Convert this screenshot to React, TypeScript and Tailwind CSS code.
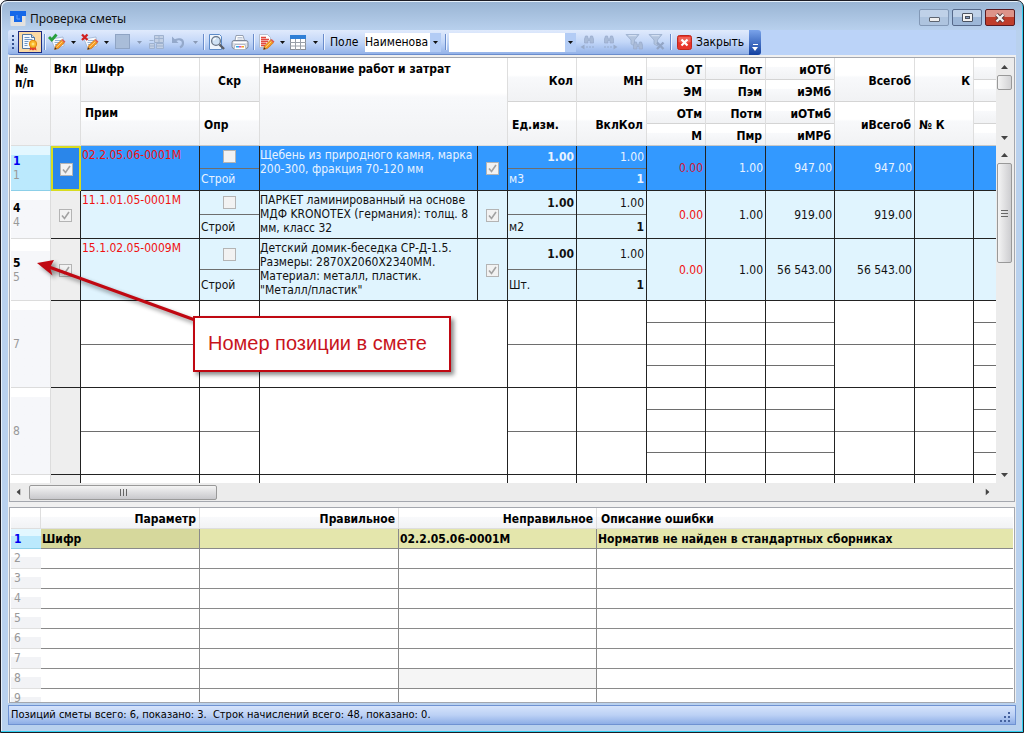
import type { ReactNode } from "react";

const ArrowDown = ({ muted = false }: { muted?: boolean }) => (
  <svg width="5" height="3" viewBox="0 0 5 3" fill={muted ? "#8a9ab5" : "#111"}>
    <path d="M0 0h5L2.5 3z" />
  </svg>
);

const Separator = () => (
  <div className="flex h-full w-1 items-center justify-center">
    <div className="h-4 w-px bg-[#6a8ccb] shadow-[1px_0_0_#eef4ff]" />
  </div>
);

const ToolButton = ({ label, children }: { label: string; children: ReactNode }) => (
  <button aria-label={label} className="flex h-full w-[23px] items-center justify-center">
    {children}
  </button>
);

const SplitButton = ({
  label,
  muted,
  children,
}: {
  label: string;
  muted?: boolean;
  children: ReactNode;
}) => (
  <div className="flex h-full">
    <button aria-label={label} className="flex w-[21px] items-center justify-center">
      {children}
    </button>
    <button aria-label={`${label}: меню`} className="flex w-3 items-center justify-center">
      <ArrowDown muted={muted} />
    </button>
  </div>
);

const Pencil = () => (
  <g>
    <path d="M6.5 16.500l1-3.800 6-5.700 2.900 2.800-6 5.700z" fill="#f59a23" stroke="#c9690c" strokeWidth=".6" />
    <path d="M8.500 14.300l6-5.800" stroke="#ffd27a" strokeWidth="1" />
    <path d="M13.500 7l1.200-1 2.800 2.700-1.100 1.100z" fill="#e0554a" />
    <path d="M6.500 16.500l.6-2.200 1.700 1.600z" fill="#333" />
  </g>
);

const CertificateIcon = () => (
  <svg width="18" height="18" viewBox="0 0 18 18">
    <path d="M1.500 1.500h9l3 3v11h-12z" fill="#f4f8fd" stroke="#54789f" />
    <path d="M10.500 1.500v3h3" fill="#c8dcf0" stroke="#54789f" />
    <path d="M3.500 4.500h5M3.500 6.500h8M3.500 8.500h4M3.500 10.500h3M3.500 12.500h3" stroke="#6f97c4" />
    <path d="M9.500 12l-1 5.500 2-1 1.500 1 1.500-1 2 1-1-5.500z" fill="#e3402b" />
    <circle cx="12" cy="11" r="3.700" fill="#fbb829" stroke="#e08a12" />
    <circle cx="12" cy="11" r="1.500" fill="#ffe07a" />
  </svg>
);

const CheckEditIcon = () => (
  <svg width="18" height="18" viewBox="0 0 18 18">
    <path d="M3 6l12-2 1 9-9 3z" fill="#f6f9fd" stroke="#9db3d0" strokeWidth=".8" />
    <path d="M7 7.500h6M6.500 9.500h6M7 11.500h4" stroke="#8aa9d1" strokeWidth=".9" />
    <path d="M1 4l2.800 3L8.500 1.500" fill="none" stroke="#28a03c" strokeWidth="2.800" />
    <Pencil />
  </svg>
);

const CrossEditIcon = () => (
  <svg width="18" height="18" viewBox="0 0 18 18">
    <path d="M3 6l12-2 1 9-9 3z" fill="#f6f9fd" stroke="#9db3d0" strokeWidth=".8" />
    <path d="M7 7.500h6M6.500 9.500h6M7 11.500h4" stroke="#8aa9d1" strokeWidth=".9" />
    <path d="M1 1.500l5.500 5.500M6.500 1.500L1 7" stroke="#d02020" strokeWidth="2.300" />
    <Pencil />
  </svg>
);

const SquareIcon = () => (
  <svg width="16" height="16" viewBox="0 0 16 16">
    <rect x=".5" y=".5" width="14" height="14" fill="#a9bdd9" stroke="#8fa4c4" />
  </svg>
);

const CopyTableIcon = () => (
  <svg width="17" height="16" viewBox="0 0 17 16" fill="#c3d0e4" stroke="#9fb2cf">
    <path d="M6.500 1.500h9v7h-9zM6.500 4.500h9M11 1.500v7" />
    <path d="M1.500 9.500h5v5h-5zM1.500 12h5M8.500 9.500h7v5h-7zM8.500 12h7M1.500 6.500h4" />
  </svg>
);

const UndoIcon = () => (
  <svg width="15" height="14" viewBox="0 0 15 14" fill="none">
    <path d="M3 6c4-3 9-2 9 2 0 2-1 3.500-3 4.500" stroke="#94a9cb" strokeWidth="2.200" />
    <path d="M1 1.500v6.500h6.500z" fill="#94a9cb" />
  </svg>
);

const PreviewIcon = () => (
  <svg width="17" height="17" viewBox="0 0 17 17">
    <path d="M1.500 .5h10l2 2v13h-12z" fill="#eef5fd" stroke="#5d8bc8" />
    <circle cx="8" cy="7" r="4.400" fill="#cfe2f5" stroke="#6a7686" strokeWidth="1.300" />
    <path d="M5.500 6.500a2.800 2.800 0 012.500-2.200" stroke="#fff" strokeWidth="1.200" fill="none" />
    <path d="M11.500 10.500l4.500 4.500" stroke="#5a5f68" strokeWidth="2.400" />
  </svg>
);

const PrinterIcon = () => (
  <svg width="18" height="17" viewBox="0 0 18 17">
    <path d="M5 1.500h7l1.500 5h-9.500z" fill="#fff" stroke="#8d97a8" strokeWidth=".9" />
    <path d="M6.500 3.500h5M6.300 5h5.500" stroke="#a9b6cb" strokeWidth=".8" />
    <rect x="1" y="6.500" width="16" height="8" rx="2" fill="#dcdfe6" stroke="#7d8798" />
    <path d="M2.500 8.500h13" stroke="#fff" />
    <path d="M4 10.500h10l1 5H3z" fill="#fff" stroke="#9aa5b5" strokeWidth=".7" />
    <path d="M5 12.800h3" stroke="#35a7e8" strokeWidth="1.600" />
    <path d="M8 12.800h2.500" stroke="#e04cb0" strokeWidth="1.600" />
    <path d="M10.500 12.800H13" stroke="#f4a322" strokeWidth="1.600" />
  </svg>
);

const EditPageIcon = () => (
  <svg width="18" height="18" viewBox="0 0 18 18">
    <path d="M2.500 1.500h8l3 3v9l-11 1z" fill="#fdfdfd" stroke="#aab4c4" strokeWidth=".8" />
    <path d="M4 4.500h5M4 6.500h8M4 8.500h7M4 10.500h5M4 12.500h4" stroke="#e2493f" strokeWidth="1.300" />
    <Pencil />
  </svg>
);

const GridIcon = () => (
  <svg width="17" height="17" viewBox="0 0 17 17">
    <rect x=".5" y="1.500" width="15" height="14" fill="#fff" stroke="#8a9099" />
    <path d="M0 1h16v4H0z" fill="#2f7fd6" />
    <path d="M0 8.500h16M0 12h16M5.500 5v11M10.500 5v11" stroke="#9aa0a8" />
  </svg>
);

const Binoculars = () => (
  <path
    d="M1.500 9V5l1-3h2l.8 3h1.400l.8-3h2l1 3v4h-3.500V6.500H5V9z"
    fill="#a9bbd8"
    stroke="#98abcb"
    strokeWidth=".7"
  />
);

const FindIcon = ({ forward = false }: { forward?: boolean }) => (
  <svg width="15" height="17" viewBox="0 0 15 17">
    <g transform={forward ? "translate(0 0)" : "translate(3 0)"}>
      <Binoculars />
    </g>
    {forward ? (
      <path d="M1 12.500h2v1H1zM4 12.500h2v1H4zM7 12.500h2v1H7zM10.500 10.500l4 2.500-4 2.500z" fill="#98abcb" />
    ) : (
      <path d="M12 12.500h2v1h-2zM9 12.500h2v1H9zM6 12.500h2v1H6zM4.500 10.500L.5 13l4 2.500z" fill="#98abcb" />
    )}
  </svg>
);

const FilterIcon = ({ clear = false }: { clear?: boolean }) => (
  <svg width="18" height="18" viewBox="0 0 18 18">
    <path d="M1 1.500h13L9.500 7v6L6 11V7z" fill="#b3c4de" stroke="#9aaecd" strokeWidth=".8" />
    <path d="M3.500 2.700h8" stroke="#dbe6f7" />
    {clear ? (
      <path d="M9 9.500l6.500 6.500M15.500 9.500L9 16" stroke="#93a6c6" strokeWidth="2.400" />
    ) : (
      <g transform="translate(7 7)">
        <Binoculars />
      </g>
    )}
  </svg>
);

const CloseIcon = () => (
  <svg width="15" height="15" viewBox="0 0 15 15">
    <rect x=".5" y=".5" width="14" height="14" rx="2" fill="#e8352b" stroke="#c0281f" />
    <path d="M1.500 2h12v5q-6 2-12 0z" fill="#f2786c" opacity=".7" />
    <path d="M4.500 4.500l6 6M10.500 4.500l-6 6" stroke="#fff" strokeWidth="2.200" />
  </svg>
);

const TitleBar = () => (
  <header className="flex h-[29px] shrink-0 items-start pl-[2px] pr-[1px] pt-2">
    <svg width="16" height="17" viewBox="0 0 16 17" className="mt-[1px]">
      <rect x=".5" y="1" width="15" height="15" rx="1" fill="#e4e2df" />
      <path d="M0 1h16v5h-4v6H4V6H0z" fill="#1668e8" />
      <path d="M7 5v4h3" stroke="#5c9cff" fill="none" />
    </svg>
    <h1 className="ml-1 grow font-['Noto_Sans',sans-serif] text-xs leading-5 text-[#111]">Проверка сметы</h1>
    <div className="flex gap-[3px]">
      <button
        aria-label="Свернуть"
        className="flex h-[17px] w-[30px] items-center justify-center rounded-[2px] border border-[#8298b6] bg-linear-to-b from-[#bfd1e8] from-50% to-[#aec4df] to-50%"
      >
        <span className="mt-[3px] h-[5px] w-[11px] rounded-[1px] border border-[#5d6470] bg-[#eee]" />
      </button>
      <button
        aria-label="Развернуть"
        className="flex h-[17px] w-[30px] items-center justify-center rounded-[2px] border border-[#56698a] bg-linear-to-b from-[#bfd1e8] from-50% to-[#9db7d8] to-50%"
      >
        <span className="flex h-[9px] w-[11px] items-center justify-center rounded-[1px] border border-[#4a5260] bg-[#f2f2f2]">
          <span className="h-[3px] w-[5px] border border-[#4a5260] bg-[#7f97bd]" />
        </span>
      </button>
      <button
        aria-label="Закрыть окно"
        className="flex h-[17px] w-[30px] items-center justify-center rounded-[2px] border border-[#5a1a20] bg-linear-to-b from-[#dd9389] from-50% to-[#bf3d2a] to-50%"
      >
        <svg width="12" height="10" viewBox="0 0 12 10">
          <path d="M2.500 1.500l7 7M9.500 1.500l-7 7" stroke="#5b3a3c" strokeWidth="4" />
          <path d="M2.500 1.500l7 7M9.500 1.500l-7 7" stroke="#f4f4f4" strokeWidth="2.300" />
        </svg>
      </button>
    </div>
  </header>
);

const Toolbar = () => (
  <div className="h-[25px] shrink-0 bg-[#bbd3f8]">
    <div className="flex h-full w-fit">
      <div className="flex items-center rounded-l-[3px] border-b border-[#6b8dcc] bg-linear-to-b from-[#e0eafc] via-[#c3d7f8] to-[#93b2e8]">
        <div className="flex w-[10px] flex-col items-center gap-[2px]">
          {[0, 1, 2, 3].map((i) => (
            <span key={i} className="size-[2px] bg-[#34508f]" />
          ))}
        </div>
        <button
          aria-label="Проверка"
          className="flex h-[22px] w-6 items-center justify-center border border-[#1c2a80] bg-[#fbd9a2]"
        >
          <CertificateIcon />
        </button>
        <Separator />
        <SplitButton label="Включить">
          <CheckEditIcon />
        </SplitButton>
        <SplitButton label="Исключить">
          <CrossEditIcon />
        </SplitButton>
        <SplitButton label="Цвет" muted>
          <SquareIcon />
        </SplitButton>
        <ToolButton label="Копировать">
          <CopyTableIcon />
        </ToolButton>
        <SplitButton label="Отменить" muted>
          <UndoIcon />
        </SplitButton>
        <Separator />
        <ToolButton label="Просмотр">
          <PreviewIcon />
        </ToolButton>
        <ToolButton label="Печать">
          <PrinterIcon />
        </ToolButton>
        <Separator />
        <SplitButton label="Правка">
          <EditPageIcon />
        </SplitButton>
        <SplitButton label="Таблица">
          <GridIcon />
        </SplitButton>
        <Separator />
        <label htmlFor="field" className="w-10 pl-[5px]">
          Поле
        </label>
        <div className="grid w-[76px] items-center">
          <select
            id="field"
            className="h-[19px] w-full appearance-none overflow-hidden bg-white pr-[11px] [grid-area:1/1]"
          >
            <option>Наименова</option>
          </select>
          <span className="pointer-events-none flex h-[19px] w-[11px] items-center justify-center justify-self-end bg-[#b3ccf5] [grid-area:1/1]">
            <ArrowDown />
          </span>
        </div>
        <div className="flex h-full w-2 justify-center">
          <Separator />
        </div>
        <div className="flex h-[19px] w-[127px] bg-white">
          <input aria-label="Поиск" className="w-0 grow px-1 outline-none" />
          <button aria-label="Список" className="flex w-[11px] items-center justify-center bg-[#b3ccf5]">
            <ArrowDown />
          </button>
        </div>
        <ToolButton label="Найти предыдущее">
          <FindIcon />
        </ToolButton>
        <ToolButton label="Найти следующее">
          <FindIcon forward />
        </ToolButton>
        <ToolButton label="Фильтр">
          <FilterIcon />
        </ToolButton>
        <ToolButton label="Снять фильтр">
          <FilterIcon clear />
        </ToolButton>
        <Separator />
        <button className="flex h-full items-center gap-1 px-[5px]">
          <CloseIcon />
          Закрыть
        </button>
      </div>
      <button
        aria-label="Ещё"
        className="flex w-3 flex-col items-center justify-end gap-[2px] rounded-r-[3px] bg-linear-to-b from-[#7aa3ea] to-[#123f9f] pb-1"
      >
        <span className="h-px w-[5px] bg-white" />
        <svg width="6" height="4" viewBox="0 0 6 4">
          <path d="M0 0h6L3 4z" fill="#fff" />
        </svg>
      </button>
    </div>
  </div>
);

const headFill = "bg-linear-to-b from-white from-40% via-[#f8f9fb] via-45% to-[#f1f2f4]";
const headStack = "flex h-full flex-col divide-y divide-[#d4d4d4]";
const headBox = "h-[88px] border-b border-[#c8c8c8] p-0";

// One header column: the cells are stacked and share the height equally
const HeadCell = ({ cells }: { cells: string[] }) => (
  <th className={headBox}>
    <div className={`${headStack} border-r border-[#dedede]`}>
      {cells.map((cell) => (
        <div key={cell} className={`flex flex-1 items-center px-[3px] pt-[2px] ${headFill}`}>
          <span
            className={`w-full ${cell === "Ед.изм." || cell === "№ К" ? "pl-[1px] text-left" : "text-right"}`}
          >
            {cell}
          </span>
        </div>
      ))}
    </div>
  </th>
);

const CheckBox = ({ label, checked = false }: { label: string; checked?: boolean }) => (
  <span className="inline-grid place-items-center align-middle">
    <input
      type="checkbox"
      aria-label={label}
      defaultChecked={checked}
      className="size-[13px] appearance-none border border-[#b4b4b4] bg-[#f2f2f2] [grid-area:1/1]"
    />
    {checked && (
      <svg width="9" height="9" viewBox="0 0 9 9" className="pointer-events-none [grid-area:1/1]">
        <path d="M1 4.500l2.500 3L8 1" fill="none" stroke="#a2a2a2" strokeWidth="1.600" />
      </svg>
    )}
  </span>
);

const positions = [
  {
    num: 1,
    height: "h-[45px]",
    code: "02.2.05.06-0001М",
    name: ["Щебень из природного камня, марка", "200-300, фракция 70-120 мм"],
    unit: "м3",
    total: "947.00",
    selected: true,
  },
  {
    num: 4,
    height: "h-12",
    code: "11.1.01.05-0001М",
    name: ["ПАРКЕТ ламинированный на основе", "МДФ KRONOTEX (германия): толщ. 8", "мм, класс 32"],
    unit: "м2",
    total: "919.00",
    selected: false,
  },
  {
    num: 5,
    height: "h-[62px]",
    code: "15.1.02.05-0009М",
    name: ["Детский домик-беседка СР-Д-1.5.", "Размеры: 2870X2060X2340ММ.", "Материал: металл, пластик.", '"Металл/пластик"'],
    unit: "Шт.",
    total: "56 543.00",
    selected: false,
  },
];

const cellLine = "border-r border-b border-[#222] p-0";

const Halves = ({ top, bottom }: { top?: ReactNode; bottom?: ReactNode }) => (
  <div className="flex h-full flex-col divide-y divide-[#6e6e6e]">
    <div className="flex flex-1 items-center px-[2px]">
      <div className="w-full">{top}</div>
    </div>
    <div className="flex flex-1 items-center px-[1px]">
      <div className="w-full">{bottom}</div>
    </div>
  </div>
);

const Quarters = () => (
  <div className="flex h-full flex-col divide-y divide-[#6e6e6e]">
    {[0, 1, 2, 3].map((i) => (
      <div key={i} className="flex-1" />
    ))}
  </div>
);

const PositionRow = ({ row }: { row: (typeof positions)[number] }) => {
  const { num, height, code, name, unit, total, selected } = row;
  const line = `${height} ${cellLine}`;
  return (
    <tr className={selected ? "bg-[#3399ff] text-[#e8f3ff]" : "bg-[#e0f4fe] text-[#111]"}>
      <th
        scope="row"
        className={`${height} border-r border-b pl-[2px] text-left leading-[14px] ${
          selected
            ? "border-[#8ccfe8] bg-linear-to-b from-[#e3f7ff] from-20% to-[#bbe9fd] to-20% text-[#0000f0]"
            : "border-[#dcdcdc] bg-linear-to-b from-white from-20% to-[#f6f7fa] to-20% text-black"
        }`}
      >
        {num}
        <br />
        <span className="font-normal text-[#999]">{num}</span>
      </th>
      <td
        className={`p-0 text-center ${
          selected ? "border-2 border-[#d8dc20] bg-[#2a86ea]" : "border-r border-b border-[#222] bg-[#eeeeee]"
        }`}
      >
        <CheckBox label={`Включить позицию ${num}`} checked />
      </td>
      <td className={`${cellLine} pl-[1px] pt-[2px] align-top leading-[14px] text-[#f01010]`}>{code}</td>
      <td className={line}>
        <Halves
          top={
            <div className="flex justify-center">
              <CheckBox label={`Скрыть позицию ${num}`} />
            </div>
          }
          bottom="Строй"
        />
      </td>
      <td className={`${cellLine} overflow-hidden pt-[2px] align-top leading-[14px] whitespace-nowrap`}>
        {name.map((text) => (
          <div key={text}>{text}</div>
        ))}
      </td>
      <td className={`${cellLine} text-center`}>
        <CheckBox label={`Проверено ${num}`} checked />
      </td>
      <td className={line}>
        <Halves top={<div className="text-right font-bold">1.00</div>} bottom={unit} />
      </td>
      <td className={line}>
        <Halves
          top={<div className="text-right">1.00</div>}
          bottom={<div className="pr-[1px] text-right font-bold">1</div>}
        />
      </td>
      <td className={`${cellLine} pr-[2px] text-right ${selected ? "text-[#d01838]" : "text-[#f01010]"}`}>0.00</td>
      <td className={`${cellLine} pr-[2px] text-right`}>1.00</td>
      <td className={`${cellLine} pr-[2px] text-right`}>{total}</td>
      <td className={`${cellLine} pr-[2px] text-right`}>{total}</td>
      <td className={cellLine} />
      <td className="border-b border-[#222]" />
    </tr>
  );
};

const EmptyRow = ({ num }: { num?: number }) => {
  const line = num ? `h-[87px] ${cellLine}` : "border-r border-[#222] p-0";
  return (
    <tr>
      <th
        scope="row"
        className="h-[87px] border-r border-b border-[#dcdcdc] bg-linear-to-b from-white from-10% to-[#f6f7fa] to-10% pl-[2px] text-left font-normal text-[#999]"
      >
        {num}
      </th>
      <td className={`${line} bg-[#eeeeee]`} />
      <td className={line}>{num && <Halves />}</td>
      <td className={line}>{num && <Halves />}</td>
      <td className={line} colSpan={2} />
      <td className={line}>{num && <Halves />}</td>
      <td className={line}>{num && <Halves />}</td>
      <td className={line}>{num && <Quarters />}</td>
      <td className={line}>{num && <Quarters />}</td>
      <td className={line}>{num && <Quarters />}</td>
      <td className={line}>{num && <Halves />}</td>
      <td className={line}>{num && <Halves />}</td>
      <td className={num ? "h-[87px] border-b border-[#222] p-0" : "p-0"}>{num && <Quarters />}</td>
    </tr>
  );
};

const ScrollArrow = ({ label, turn }: { label: string; turn: string }) => (
  <button aria-label={label} className="flex size-[17px] shrink-0 items-center justify-center">
    <svg width="7" height="4" viewBox="0 0 7 4" className={turn}>
      <path d="M0 0h7L3.500 4z" fill="#444" />
    </svg>
  </button>
);

const PositionsTable = () => (
  <section className="mx-[1px] mt-[2px] flex min-h-0 grow flex-col border border-[#a4a7ae] bg-[#ececec]">
    <div className="flex h-0 grow">
      <div className="w-0 grow overflow-hidden bg-white pl-[1px]">
        <table className="w-full table-fixed border-separate border-spacing-0">
          <colgroup>
            <col className="w-10" />
            <col className="w-[30px]" />
            <col className="w-[119px]" />
            <col className="w-[60px]" />
            <col className="w-[218px]" />
            <col className="w-[30px]" />
            <col className="w-[69px]" />
            <col className="w-[70px]" />
            <col className="w-[59px]" />
            <col className="w-[60px]" />
            <col className="w-[69px]" />
            <col className="w-20" />
            <col className="w-[59px]" />
            <col />
          </colgroup>
          <thead>
            <tr>
              <th className={`border-r border-b border-[#dedede] p-1 text-left align-top leading-[14px] ${headFill}`}>
                №
                <br />
                п/п
              </th>
              <th className={`border-r border-b border-[#dedede] px-0 py-1 text-center align-top leading-[14px] ${headFill}`}>
                Вкл
              </th>
              <th className={headBox}>
                <div className={`${headStack} border-r border-[#dedede] text-left leading-[14px]`}>
                  <div className={`flex-1 p-1 ${headFill}`}>Шифр</div>
                  <div className={`flex-1 p-1 ${headFill}`}>Прим</div>
                </div>
              </th>
              <th className={headBox}>
                <div className={`${headStack} border-r border-[#dedede]`}>
                  <div className={`flex flex-1 items-center justify-center pt-[2px] ${headFill}`}>Скр</div>
                  <div className={`flex flex-1 items-center px-1 pt-[2px] ${headFill}`}>Опр</div>
                </div>
              </th>
              <th
                colSpan={2}
                className={`border-r border-b border-[#dedede] px-[3px] py-1 text-left align-top leading-[14px] ${headFill}`}
              >
                Наименование работ и затрат
              </th>
              <HeadCell cells={["Кол", "Ед.изм."]} />
              <HeadCell cells={["МН", "ВклКол"]} />
              <HeadCell cells={["ОТ", "ЭМ", "ОТм", "М"]} />
              <HeadCell cells={["Пот", "Пэм", "Потм", "Пмр"]} />
              <HeadCell cells={["иОТб", "иЭМб", "иОТмб", "иМРб"]} />
              <HeadCell cells={["Всегоб", "иВсегоб"]} />
              <HeadCell cells={["К", "№ К"]} />
              <th className={headBox}>
                <div className={headStack}>
                  {[0, 1, 2, 3].map((i) => (
                    <div key={i} className={`flex-1 ${headFill}`} />
                  ))}
                </div>
              </th>
            </tr>
          </thead>
          <tbody>
            {positions.map((row) => (
              <PositionRow key={row.num} row={row} />
            ))}
            <EmptyRow num={7} />
            <EmptyRow num={8} />
            <EmptyRow />
          </tbody>
        </table>
      </div>
      <div className="mr-[1px] flex w-[17px] shrink-0 flex-col">
        <div className="flex h-[88px] shrink-0 flex-col">
          <ScrollArrow label="Заголовок вверх" turn="rotate-180" />
          <div className="mx-[1px] h-[15px] rounded-[2px] border border-[#999] bg-linear-to-r from-[#f4f4f4] to-[#d2d2d4]" />
          <div className="grow" />
          <ScrollArrow label="Заголовок вниз" turn="rotate-0" />
        </div>
        <div className="flex h-0 grow flex-col">
          <ScrollArrow label="Вверх" turn="rotate-180" />
          <div className="mx-[1px] flex h-[100px] flex-col items-center justify-center gap-[2px] rounded-[2px] border border-[#999] bg-linear-to-r from-[#f4f4f4] to-[#cdcdd0]">
            <span className="h-px w-[7px] bg-[#666]" />
            <span className="h-px w-[7px] bg-[#666]" />
            <span className="h-px w-[7px] bg-[#666]" />
          </div>
          <div className="grow" />
          <ScrollArrow label="Вниз" turn="rotate-0" />
        </div>
      </div>
    </div>
    <div className="mr-[18px] flex h-[18px] shrink-0 items-center">
      <ScrollArrow label="Влево" turn="rotate-90" />
      <div className="ml-[2px] flex h-[15px] w-[188px] items-center justify-center gap-[2px] rounded-[2px] border border-[#999] bg-linear-to-b from-[#f4f4f4] to-[#c8c8cc]">
        <span className="h-[7px] w-px bg-[#666]" />
        <span className="h-[7px] w-px bg-[#666]" />
        <span className="h-[7px] w-px bg-[#666]" />
      </div>
      <div className="grow" />
      <ScrollArrow label="Вправо" turn="-rotate-90" />
    </div>
  </section>
);

const errorHead = "border-r border-b border-[#dedede] p-0 pt-[2px] pr-[3px] text-right";
const errorCell = "border-r border-b border-[#8a8a8a] p-0 pl-[1px]";

const ErrorsTable = () => (
  <section className="mx-[1px] mt-[5px] h-[196px] shrink-0 overflow-hidden border border-[#a4a7ae] bg-white px-[1px]">
    <table className="w-full table-fixed border-separate border-spacing-0 text-left leading-4">
      <colgroup>
        <col className="w-[30px]" />
        <col className="w-[159px]" />
        <col className="w-[199px]" />
        <col className="w-[198px]" />
        <col />
      </colgroup>
      <thead>
        <tr className={headFill}>
          <th className="h-[21px] border-r border-b border-[#dedede]" />
          <th className={errorHead}>Параметр</th>
          <th className={errorHead}>Правильное</th>
          <th className={errorHead}>Неправильное</th>
          <th className="border-b border-[#dedede] p-0 pt-[2px] pl-1">Описание ошибки</th>
        </tr>
      </thead>
      <tbody>
        <tr className="bg-[#e4e6ac] font-bold">
          <th
            scope="row"
            className="h-5 border-b border-[#8ccfe8] bg-linear-to-b from-[#e3f7ff] from-35% to-[#bbe9fd] to-35% p-0 pl-[3px] text-[#0000f0]"
          >
            1
          </th>
          <td className={`${errorCell} bg-[#d6d89c]`}>Шифр</td>
          <td className={errorCell} />
          <td className={errorCell}>02.2.05.06-0001М</td>
          <td className="border-b border-[#8a8a8a] p-0 pl-[1px]">Норматив не найден в стандартных сборниках</td>
        </tr>
        {[2, 3, 4, 5, 6, 7, 8, 9].map((n) => (
          <tr key={n}>
            <th
              scope="row"
              className="h-5 border-b border-[#e0e0e0] bg-linear-to-b from-white from-40% to-[#f2f3f6] to-40% p-0 pl-[3px] align-top leading-[18px] font-normal text-[#999]"
            >
              {n}
            </th>
            <td className={errorCell} />
            <td className={errorCell} />
            <td className={`${errorCell} ${n === 8 ? "bg-[#f5f5f5]" : ""}`} />
            <td className="border-b border-[#8a8a8a]" />
          </tr>
        ))}
      </tbody>
    </table>
  </section>
);

const StatusBar = () => (
  <footer className="mt-[2px] flex h-5 shrink-0 items-center border border-[#6f92d2] bg-linear-to-b from-[#d5e3fb] via-[#bcd1f5] to-[#8eaee6] pl-[2px] text-[11px]">
    <span className="grow whitespace-pre">Позиций сметы всего: 6, показано: 3.  Строк начислений всего: 48, показано: 0.</span>
    <svg width="11" height="11" viewBox="0 0 11 11" className="mt-1 mr-1" fill="#45629f">
      <path d="M8 0h2v2H8zM8 4h2v2H8zM8 8h2v2H8zM4 4h2v2H4zM4 8h2v2H4zM0 8h2v2H0z" />
    </svg>
  </footer>
);

// Note with an arrow that lies over the table
const Callout = () => (
  <div className="pointer-events-none absolute top-[254px] left-8">
    <svg width="425" height="124" viewBox="0 0 425 124" className="drop-shadow-[3px_3px_2px_rgba(0,0,0,0.45)]">
      <path d="M162 65L16 12" stroke="#c00812" strokeWidth="3" />
      <path d="M4 8l17-3-4 7.500 2.500 8z" fill="#c00812" />
      <rect x="161" y="62" width="256" height="54" fill="#fff" stroke="#c00812" strokeWidth="2" />
    </svg>
    <p className="absolute top-[74px] left-[175px] font-['Liberation_Sans',Arial,sans-serif] text-xl leading-7 whitespace-nowrap text-[#c8141c]">
      Номер позиции в смете
    </p>
  </div>
);

const App = () => {
  return (
    <main className="relative flex h-screen min-h-[600px] flex-col overflow-hidden rounded-t-[7px] border border-[#1c1c24] bg-[#b9d1ee] bg-linear-to-b from-[#99b4d3] to-[#b9d1ee] to-[30px] px-[7px] pb-[7px] font-['DejaVu_Sans_Condensed','DejaVu_Sans',sans-serif] text-xs shadow-[inset_-1px_-1px_0_#30d0f0,inset_1px_1px_0_#e6f0fa]">
      <TitleBar />
      <Toolbar />
      <div className="flex min-h-0 grow flex-col bg-[#f0f0f0]">
        <PositionsTable />
        <ErrorsTable />
      </div>
      <StatusBar />
      <Callout />
    </main>
  );
};

export default App;
